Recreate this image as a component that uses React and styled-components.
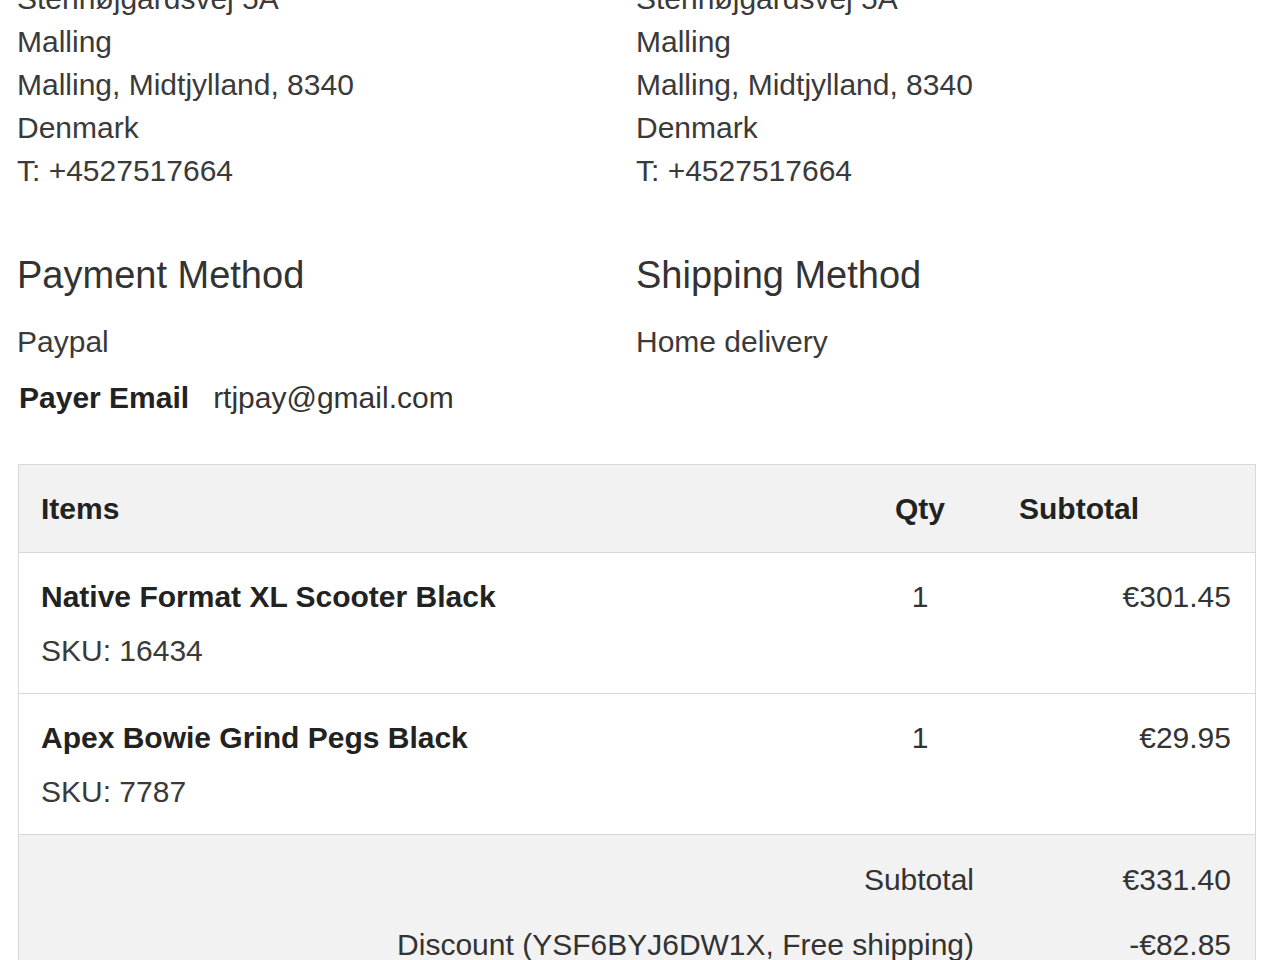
import React from "react";
import styled, { createGlobalStyle } from "styled-components";

const GlobalStyle = createGlobalStyle`
  html, body {
    margin: 0;
    padding: 0;
    background: #fff;
  }
  body {
    font-family: "Liberation Sans", Arial, sans-serif;
    color: #333;
    overflow: hidden;
  }
`;

const address = [
  "Stenhøjgårdsvej 5A",
  "Malling",
  "Malling, Midtjylland, 8340",
  "Denmark",
  "T: +4527517664",
];

const items = [
  { name: "Native Format XL Scooter Black", sku: "16434", qty: 1, price: "€301.45" },
  { name: "Apex Bowie Grind Pegs Black", sku: "7787", qty: 1, price: "€29.95" },
];

const totals = [
  { label: "Subtotal", value: "€331.40" },
  { label: "Discount (YSF6BYJ6DW1X, Free shipping)", value: "-€82.85" },
];

const App = () => {
  return (
    <Page>
      <GlobalStyle />
      <Columns>
        <Address>
          {address.map((line) => (
            <div key={line}>{line}</div>
          ))}
        </Address>
        <Address>
          {address.map((line) => (
            <div key={line}>{line}</div>
          ))}
        </Address>
      </Columns>

      <Columns className="methods">
        <Method>
          <Heading>Payment Method</Heading>
          <MethodText>Paypal</MethodText>
          <PayerRow>
            <strong>Payer Email</strong>
            <span>rtjpay@gmail.com</span>
          </PayerRow>
        </Method>
        <Method>
          <Heading>Shipping Method</Heading>
          <MethodText>Home delivery</MethodText>
        </Method>
      </Columns>

      <Table>
        <HeadRow>
          <ItemCol>Items</ItemCol>
          <QtyCol>Qty</QtyCol>
          <PriceCol $head>Subtotal</PriceCol>
        </HeadRow>
        {items.map((item) => (
          <ItemRow key={item.sku}>
            <ItemCol>
              <ItemName>{item.name}</ItemName>
              <Sku>SKU: {item.sku}</Sku>
            </ItemCol>
            <QtyCol>{item.qty}</QtyCol>
            <PriceCol>{item.price}</PriceCol>
          </ItemRow>
        ))}
        <Totals>
          {totals.map((t) => (
            <TotalRow key={t.label}>
              <TotalLabel>{t.label}</TotalLabel>
              <PriceCol>{t.value}</PriceCol>
            </TotalRow>
          ))}
        </Totals>
      </Table>
    </Page>
  );
};

const Page = styled.div`
  margin-top: -23px;
  padding: 0 24px 40px 18px;
  font-size: 30px;
  line-height: 43px;

  .methods {
    margin-top: 62px;
  }
`;

const Columns = styled.div`
  display: grid;
  grid-template-columns: 1fr 1fr;
`;

const Address = styled.div`
  color: #3a3a3a;
  margin-left: -1px;
`;

const Method = styled.div`
  display: flex;
  flex-direction: column;
  margin-left: -1px;
`;

const Heading = styled.h2`
  margin: 0;
  font-size: 38px;
  font-weight: normal;
  line-height: 42px;
  color: #333;
`;

const MethodText = styled.div`
  margin-top: 24px;
  color: #3a3a3a;
`;

const PayerRow = styled.div`
  display: flex;
  gap: 24px;
  margin-top: 13px;
  padding-left: 2px;

  strong {
    color: #222;
  }
`;

const Table = styled.div`
  margin-top: 45px;
  border: 1px solid #d8d8d8;
`;

const HeadRow = styled.div`
  display: grid;
  grid-template-columns: 1fr 150px 260px;
  padding: 22px 0;
  background: #f2f2f2;
  font-weight: bold;
  color: #222;
`;

const ItemRow = styled.div`
  display: grid;
  grid-template-columns: 1fr 150px 260px;
  padding: 22px 0 21px;
  border-top: 1px solid #d8d8d8;
`;

const ItemCol = styled.div`
  padding-left: 22px;
`;

const QtyCol = styled.div`
  text-align: center;
`;

const PriceCol = styled.div`
  padding: 0 24px;
  text-align: ${(p) => (p.$head ? "left" : "right")};
`;

const ItemName = styled.div`
  font-weight: bold;
  color: #222;
  margin-bottom: 11px;
`;

const Sku = styled.div`
  color: #3a3a3a;
`;

const Totals = styled.div`
  background: #f2f2f2;
  border-top: 1px solid #d8d8d8;
  padding: 12px 0 11px;
`;

const TotalRow = styled.div`
  display: grid;
  grid-template-columns: 1fr 260px;
  padding: 11px 0;
`;

const TotalLabel = styled.div`
  text-align: right;
  padding-right: 21px;
`;

export default App;
